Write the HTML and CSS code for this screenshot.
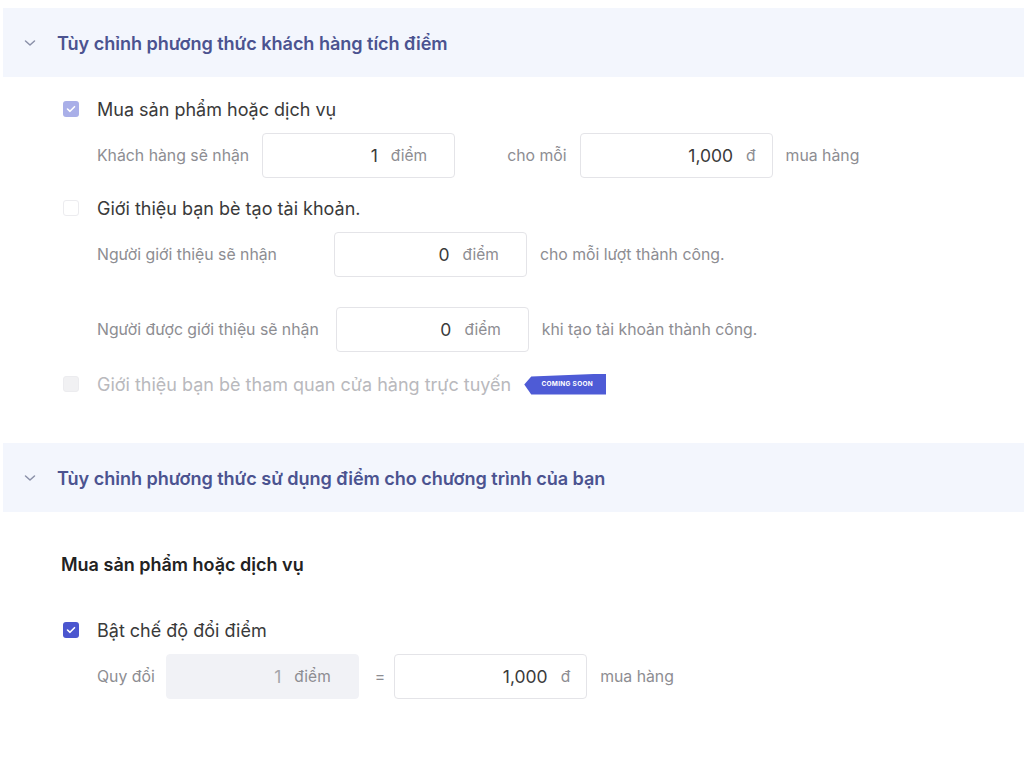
FILE: index.html
```html
<!DOCTYPE html>
<html lang="vi">
<head>
<meta charset="utf-8">
<title>Tích điểm</title>
<link rel="stylesheet" href="styles.css">
</head>
<body>
<div class="page">
  <section class="panel">
    <div class="panel-head">
      <svg class="chev" width="12" height="8" viewBox="0 0 12 8"><path d="M1.5 2 L6 6 L10.5 2" fill="none" stroke="#8a90a8" stroke-width="1.5" stroke-linecap="round" stroke-linejoin="round"/></svg>
      <h2 class="panel-title">Tùy chỉnh phương thức khách hàng tích điểm</h2>
    </div>
    <div class="panel-body body-1">
      <label class="check-row">
        <span class="cb cb-soft"><svg width="10" height="8" viewBox="0 0 10 8"><path d="M1.5 4 L4 6.3 L8.5 1.7" fill="none" stroke="#fff" stroke-width="1.6" stroke-linecap="round" stroke-linejoin="round"/></svg></span>
        <span class="check-text">Mua sản phẩm hoặc dịch vụ</span>
      </label>
      <div class="field-row r-buy">
        <span class="lbl">Khách hàng sẽ nhận</span>
        <div class="inp"><span class="val">1</span><span class="unit">điểm</span></div>
        <span class="lbl lbl-wide">cho mỗi</span>
        <div class="inp inp-money"><span class="val">1,000</span><span class="unit">đ</span></div>
        <span class="lbl">mua hàng</span>
      </div>

      <label class="check-row r-ref">
        <span class="cb cb-empty"></span>
        <span class="check-text">Giới thiệu bạn bè tạo tài khoản.</span>
      </label>
      <div class="field-row r-ref1">
        <span class="lbl lbl-ref">Người giới thiệu sẽ nhận</span>
        <div class="inp"><span class="val">0</span><span class="unit">điểm</span></div>
        <span class="lbl">cho mỗi lượt thành công.</span>
      </div>
      <div class="field-row r-ref2">
        <span class="lbl lbl-ref2">Người được giới thiệu sẽ nhận</span>
        <div class="inp"><span class="val">0</span><span class="unit">điểm</span></div>
        <span class="lbl">khi tạo tài khoản thành công.</span>
      </div>

      <div class="check-row r-dis">
        <span class="cb cb-dis"></span>
        <span class="check-text dis">Giới thiệu bạn bè tham quan cửa hàng trực tuyến</span>
        <span class="badge">COMING SOON</span>
      </div>
    </div>
  </section>

  <section class="panel panel-2">
    <div class="panel-head">
      <svg class="chev" width="12" height="8" viewBox="0 0 12 8"><path d="M1.5 2 L6 6 L10.5 2" fill="none" stroke="#8a90a8" stroke-width="1.5" stroke-linecap="round" stroke-linejoin="round"/></svg>
      <h2 class="panel-title">Tùy chỉnh phương thức sử dụng điểm cho chương trình của bạn</h2>
    </div>
    <div class="panel-body body-2">
      <h3 class="sub-title">Mua sản phẩm hoặc dịch vụ</h3>
      <label class="check-row r-redeem">
        <span class="cb cb-on"><svg width="10" height="8" viewBox="0 0 10 8"><path d="M1.5 4 L4 6.3 L8.5 1.7" fill="none" stroke="#fff" stroke-width="1.6" stroke-linecap="round" stroke-linejoin="round"/></svg></span>
        <span class="check-text">Bật chế độ đổi điểm</span>
      </label>
      <div class="field-row r-conv">
        <span class="lbl lbl-conv">Quy đổi</span>
        <div class="inp inp-dis"><span class="val">1</span><span class="unit">điểm</span></div>
        <span class="lbl eq">=</span>
        <div class="inp inp-money"><span class="val">1,000</span><span class="unit">đ</span></div>
        <span class="lbl">mua hàng</span>
      </div>
    </div>
  </section>
</div>
</body>
</html>
```

FILE: styles.css
```css
* { box-sizing: border-box; }
html, body { margin: 0; padding: 0; background: #fff; }
body {
  font-family: Inter, "Noto Sans", "Liberation Sans", sans-serif;
  color: #333;
  width: 1024px;
  height: 760px;
  overflow: hidden;
}
.page {
  padding: 8px 0 0 3px;
}
.panel-head {
  height: 69px;
  background: #f3f6fd;
  display: flex;
  align-items: center;
  padding-left: 21px;
}
.chev { margin-top: 1px; }
.panel-title {
  margin: 0 0 0 21px;
  font-size: 18.1px;
  font-weight: 600;
  color: #4b5390;
  letter-spacing: -0.05px;
}
.panel-body { padding-left: 60px; }
.body-1 { padding-top: 20px; padding-bottom: 47px; }
.check-row {
  display: flex;
  align-items: center;
  height: 24px;
}
.cb {
  width: 16px;
  height: 16px;
  border-radius: 3px;
  display: flex;
  align-items: center;
  justify-content: center;
  flex: none;
}
.cb-soft { background: #a9afe8; }
.cb-on { background: #4b56cf; }
.cb-empty { background: #fff; border: 1px solid #ececef; }
.cb-dis { background: #f1f1f3; border: 1px solid #ececef; }
.check-text {
  margin-left: 18px;
  font-size: 18px;
  color: #3a3a3a;
}
.check-text.dis { color: #b9b9bd; }
.field-row {
  display: flex;
  align-items: center;
  padding-left: 34px;
  gap: 13px;
  margin-top: 12px;
}
.lbl {
  font-size: 15.8px;
  color: #8d8d92;
}
.lbl-wide { margin-left: 39px; }
.lbl-ref { margin-right: 44px; }
.lbl-ref2 { margin-right: 4px; }
.lbl-conv { margin-right: -2px; }
.inp {
  width: 193px;
  height: 45px;
  border: 1px solid #e4e4e8;
  border-radius: 4px;
  background: #fff;
  display: flex;
  align-items: center;
  justify-content: flex-end;
  padding-right: 27px;
  gap: 13px;
}
.inp-money { padding-right: 16px; }
.inp-dis { background: #f1f2f6; border-color: #f1f2f6; }
.inp-dis .val { color: #a5a5aa; }
.val { font-size: 17.5px; color: #3a3a3a; }
.unit { font-size: 15.5px; color: #8d8d92; }
.r-ref { margin-top: 18px; }
.r-ref2 { margin-top: 30px; }
.r-dis { margin-top: 20px; }
.badge {
  margin-left: 13px;
  height: 21px;
  width: 82px;
  background: #4e5bd6;
  color: #fff;
  font-size: 6.5px;
  font-weight: 700;
  letter-spacing: 0.3px;
  display: flex;
  align-items: center;
  justify-content: center;
  padding-left: 4px;
  clip-path: polygon(7px 3px, 100% 0, 100% 100%, 7px 100%, 0 52%);
}
.body-2 { padding-left: 58px; }
.sub-title {
  margin: 0;
  font-size: 18px;
  font-weight: 600;
  color: #222;
  padding-top: 42px;
  line-height: 22px;
}
.r-redeem { margin-top: 42px; margin-left: 2px; }
.r-conv { margin-left: 2px; }
.eq { margin: 0 -4px 0 3px; }
```
